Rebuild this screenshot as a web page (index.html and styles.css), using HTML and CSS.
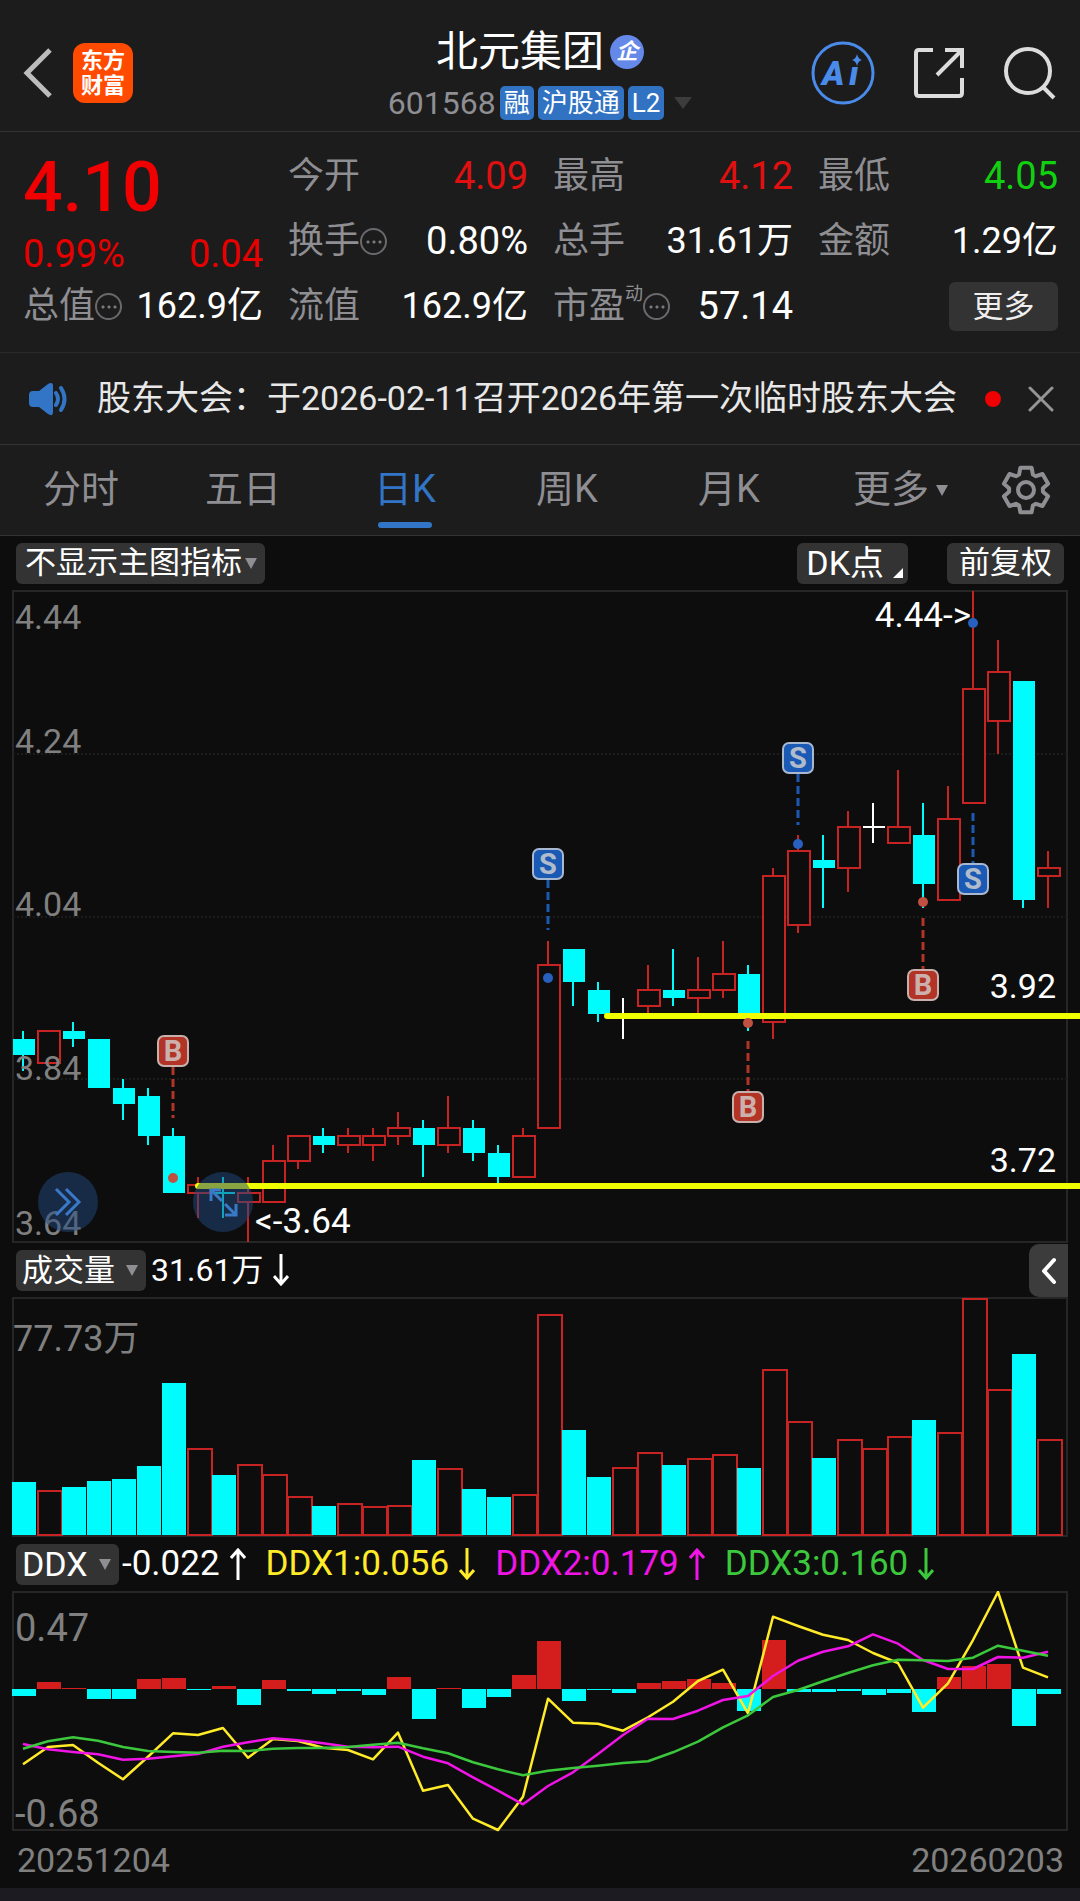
FILE: index.html
```html
<!DOCTYPE html>
<html lang="zh-CN">
<head>
<meta charset="utf-8">
<meta name="viewport" content="width=device-width, initial-scale=1">
<title>北元集团 601568</title>
<link rel="stylesheet" href="styles.css">
</head>
<body>
<header class="topbar">
  <div class="topbar-side">
    <button class="icon-btn" aria-label="返回">
      <svg width="30" height="50" viewBox="0 0 30 50"><path d="M27 2 4 25l23 23" fill="none" stroke="#bdbdbd" stroke-width="5"/></svg>
    </button>
    <a class="brand" href="#"><span>东方</span><span>财富</span></a>
  </div>
  <div class="stock">
    <h1 class="stock-name">北元集团<span class="corp">企</span></h1>
    <div class="stock-meta">
      <span class="code">601568</span>
      <span class="tag">融</span><span class="tag">沪股通</span><span class="tag">L2</span>
      <span class="tri tri-dim"></span>
    </div>
  </div>
  <div class="topbar-side topbar-actions">
    <button class="icon-btn" aria-label="Ai">
      <svg width="64" height="64" viewBox="0 0 64 64">
        <circle cx="32" cy="32" r="30" fill="none" stroke="#4a8bea" stroke-width="3"/>
        <text class="ai-text" x="11" y="44">A</text><text class="ai-text" x="38" y="44">ı</text>
        <path d="M46 13q1 5 5 6-4 1-5 6-1-5-5-6 4-1 5-6z" fill="#4a8bea"/>
      </svg>
    </button>
    <button class="icon-btn" aria-label="分享">
      <svg width="52" height="52" viewBox="0 0 52 52" fill="none" stroke="#dcdcdc" stroke-width="4"><path d="M20 3H6Q3 3 3 6v40q0 3 3 3h40q3 0 3-3V31M32 3h17v18M48 4 24 28"/></svg>
    </button>
    <button class="icon-btn" aria-label="搜索">
      <svg width="54" height="54" viewBox="0 0 54 54" fill="none" stroke="#dcdcdc" stroke-width="4"><circle cx="25" cy="25" r="22"/><path d="M40 41 51 52"/></svg>
    </button>
  </div>
</header>

<section class="quote">
  <div class="quote-main">
    <div class="price">4.10</div>
    <div class="change"><span>0.99%</span><span>0.04</span></div>
  </div>
  <div class="cell"><span class="label">今开</span><span class="num up">4.09</span></div>
  <div class="cell"><span class="label">最高</span><span class="num up">4.12</span></div>
  <div class="cell"><span class="label">最低</span><span class="num down">4.05</span></div>
  <div class="cell"><span class="label">换手<i class="more-dot"></i></span><span class="num">0.80%</span></div>
  <div class="cell"><span class="label">总手</span><span class="amount">31.61万</span></div>
  <div class="cell"><span class="label">金额</span><span class="amount">1.29亿</span></div>
  <div class="cell"><span class="label">总值<i class="more-dot"></i></span><span class="amount">162.9亿</span></div>
  <div class="cell"><span class="label">流值</span><span class="amount">162.9亿</span></div>
  <div class="cell"><span class="label">市盈<sup>动</sup><i class="more-dot"></i></span><span class="num">57.14</span></div>
  <div class="cell cell-end"><button class="more-btn">更多</button></div>
</section>

<section class="notice">
  <svg width="40" height="34" viewBox="0 0 40 34"><path d="M4 9h6L19 2q5-3 5 2v26q0 5-5 2l-9-7H4q-4 0-4-4v-8q0-4 4-4z" fill="#3275c6"/><path d="M27 11q4 6 0 12M32 6q7 11 0 22" fill="none" stroke="#3275c6" stroke-width="4" stroke-linecap="round"/></svg>
  <a class="notice-text" href="#">股东大会：于2026-02-11召开2026年第一次临时股东大会</a>
  <span class="notice-dot"></span>
  <button class="icon-btn" aria-label="关闭">
    <svg width="26" height="26" viewBox="0 0 26 26"><path d="M2 2 24 24M24 2 2 24" stroke="#959595" stroke-width="3" stroke-linecap="round"/></svg>
  </button>
</section>

<nav class="tabs">
  <button class="tab">分时</button>
  <button class="tab">五日</button>
  <button class="tab active">日K</button>
  <button class="tab">周K</button>
  <button class="tab">月K</button>
  <button class="tab tab-more">更多<span class="tri"></span></button>
  <button class="tab-gear icon-btn" aria-label="设置">
    <svg width="50" height="50" viewBox="-25 -25 50 50" fill="none" stroke="#8e8e93" stroke-width="4" stroke-linejoin="round"><path d="M-6.9-15.5-5.6-22.3H5.6L6.9-15.5 10-13.8 16.5-16 22.1-6.3 16.9-1.8V1.8L22.1 6.3 16.5 16 10 13.8 6.9 15.5 5.6 22.3H-5.6L-6.9 15.5-10 13.8-16.5 16-22.1 6.3-16.9 1.8V-1.8L-22.1-6.3-16.5-16-10-13.8z"/><circle r="8"/></svg>
  </button>
</nav>

<main class="charts">
  <div class="bar bar-main">
    <label class="drop drop-tight"><select aria-label="主图指标"><option>不显示主图指标</option></select><span class="tri"></span></label>
    <button class="chip chip-dk">DK点<span class="corner"></span></button>
    <button class="chip">前复权</button>
  </div>
  <div class="price-wrap">
    <svg id="price" class="plot" viewBox="0 590 1080 654" role="img" aria-label="日K线"></svg>
    <button class="round round-next" aria-label="展开">
      <svg width="28" height="30" viewBox="0 0 28 30" fill="none" stroke="#3a78c8" stroke-width="3"><path d="M2 2 15 15 2 28M12 2 25 15 12 28"/></svg>
    </button>
    <button class="round round-full" aria-label="全屏">
      <svg width="30" height="30" viewBox="0 0 30 30" fill="none" stroke="#3a78c8" stroke-width="3"><path d="M3 14V3h10M3 3l11 11M28 17v11H17M28 28 17 17"/></svg>
    </button>
  </div>
  <div class="bar bar-volume">
    <label class="drop"><select aria-label="副图一"><option>成交量</option></select><span class="tri"></span></label>
    <span class="legend legend-amount">31.61万<svg class="arrow" viewBox="0 0 16 32"><path d="M8 0v30M1 22l7 8 7-8"/></svg></span>
    <button class="fold" aria-label="收起">
      <svg width="16" height="28" viewBox="0 0 16 28"><path d="M13 3 3 14l10 11" fill="none" stroke="#fff" stroke-width="4" stroke-linecap="round" stroke-linejoin="round"/></svg>
    </button>
  </div>
  <svg id="volume" class="plot" viewBox="0 1297 1080 240" role="img" aria-label="成交量"></svg>
  <div class="bar">
    <label class="drop drop-latin"><select aria-label="副图二"><option>DDX</option></select><span class="tri"></span></label>
    <span class="legend">-0.022<svg class="arrow" viewBox="0 0 16 32"><path d="M8 32V2M1 10l7-8 7 8"/></svg></span>
    <span class="legend yellow">DDX1:0.056<svg class="arrow" viewBox="0 0 16 32"><path d="M8 0v30M1 22l7 8 7-8"/></svg></span>
    <span class="legend magenta">DDX2:0.179<svg class="arrow" viewBox="0 0 16 32"><path d="M8 32V2M1 10l7-8 7 8"/></svg></span>
    <span class="legend green">DDX3:0.160<svg class="arrow" viewBox="0 0 16 32"><path d="M8 0v30M1 22l7 8 7-8"/></svg></span>
  </div>
  <svg id="ddx" class="plot" viewBox="0 1591 1080 248" role="img" aria-label="DDX"></svg>
  <div class="dates"><span>20251204</span><span>20260203</span></div>
</main>
<footer class="home-strip"></footer>
<script src="charts.js"></script>
</body>
</html>
```

FILE: styles.css
```css
* { box-sizing: border-box; }

body {
  margin: 0;
  min-height: 100vh;
  display: flex;
  flex-direction: column;
  background: #1c1c1c;
  color: #fff;
  font-family: Roboto, "Noto Sans CJK SC", sans-serif;
  line-height: 1.2;
}

button, select {
  margin: 0;
  padding: 0;
  border: 0;
  background: none;
  color: inherit;
  font: inherit;
}

a { color: inherit; text-decoration: none; }
svg { display: block; }

.icon-btn { display: flex; align-items: center; justify-content: center; }

.tri {
  display: inline-block;
  border: 6px solid transparent;
  border-top: 11px solid #8e8e93;
  border-bottom: 0;
}
.tri-dim { border-width: 12px 9px 0; border-top-color: #3c3c3c; margin-left: 6px; }

/* header */
.topbar {
  display: grid;
  grid-template-columns: 1fr auto 1fr;
  height: 132px;
  padding: 14px 23px 0;
  border-bottom: 1px solid #333;
}
.topbar-side { display: flex; align-items: center; gap: 20px; }
.topbar-actions { justify-content: flex-end; gap: 38px; }
.brand {
  display: flex;
  flex-direction: column;
  align-items: center;
  justify-content: center;
  width: 60px;
  height: 60px;
  border-radius: 12px;
  background: #ff4a00;
  font-size: 22px;
  line-height: 25px;
  font-weight: 700;
}
.stock { display: flex; flex-direction: column; align-items: center; gap: 8px; padding-top: 12px; }
.stock-name {
  display: flex;
  align-items: center;
  gap: 6px;
  margin: 0;
  font-size: 42px;
  line-height: 52px;
  font-weight: 400;
}
.corp {
  width: 34px;
  height: 34px;
  border-radius: 17px;
  background: #6489e8;
  font-size: 22px;
  line-height: 34px;
  font-weight: 700;
  font-style: italic;
  text-align: center;
}
.stock-meta { display: flex; align-items: center; gap: 4px; }
.code { color: #8e8e93; font-size: 32px; line-height: 34px; }
.tag {
  padding: 0 4px;
  border-radius: 5px;
  background: #3173c2;
  font-size: 26px;
  line-height: 34px;
}
.ai-text { fill: #4a8bea; font: italic 900 34px Roboto, sans-serif; }

/* quote */
.quote {
  display: grid;
  grid-template-columns: repeat(4, 1fr);
  grid-auto-rows: 65px;
  column-gap: 25px;
  padding: 12px 22px 13px 23px;
  border-bottom: 1px solid #2a2a2a;
}
.quote-main { grid-row: span 2; color: #e60000; }
.price { font-size: 70px; line-height: 86px; font-weight: 500; color: #f00000; }
.change { display: flex; justify-content: space-between; font-size: 38px; line-height: 48px; }
.cell { display: flex; align-items: center; justify-content: space-between; white-space: nowrap; }
.cell-end { justify-content: flex-end; }
.label { display: flex; align-items: center; color: #8e8e93; font-size: 36px; }
.label sup { align-self: flex-start; font-size: 18px; line-height: 18px; }
.num { font-size: 38px; }
.amount { font-size: 36px; }
.up { color: #e01010; }
.down { color: #10d010; }
.more-dot {
  width: 27px;
  height: 27px;
  border: 2px solid #6a6a6e;
  border-radius: 14px;
  background:
    radial-gradient(circle at 6px 12px, #7a7a7e 1px, transparent 2px),
    radial-gradient(circle at 12px 12px, #7a7a7e 1px, transparent 2px),
    radial-gradient(circle at 18px 12px, #7a7a7e 1px, transparent 2px);
}
.more-btn {
  width: 109px;
  height: 49px;
  border-radius: 6px;
  background: #333;
  color: #eee;
  font-size: 31px;
  line-height: 49px;
}

/* notice */
.notice {
  display: flex;
  align-items: center;
  height: 92px;
  padding: 0 26px 0 29px;
  border-bottom: 1px solid #333;
}
.notice-text { flex: 1; padding-left: 28px; color: #e8e8e8; font-size: 34px; white-space: nowrap; }
.notice-dot { width: 16px; height: 16px; margin-right: 27px; border-radius: 8px; background: #f00000; }

/* tabs */
.tabs {
  display: grid;
  grid-template-columns: repeat(6, 3fr) 2fr;
  height: 91px;
  border-bottom: 1px solid #333;
}
.tab { position: relative; color: #8e8e93; font-size: 38px; }
.tab.active { color: #3275c6; }
.tab.active::after {
  content: "";
  position: absolute;
  left: 50%;
  bottom: 7px;
  width: 54px;
  height: 6px;
  margin-left: -27px;
  border-radius: 3px;
  background: #3275c6;
}
.tab-more .tri { position: absolute; top: 40px; right: 24px; }

/* charts */
.charts { background: #0d0d0d; }
.bar { display: flex; align-items: center; height: 54px; padding-left: 16px; }
.bar-main { padding-right: 16px; gap: 39px; }
.bar-volume { height: 53px; }
.plot { width: 100%; height: auto; }
.drop {
  display: flex;
  align-items: center;
  gap: 11px;
  height: 41px;
  padding: 0 8px 0 6px;
  border-radius: 6px;
  background: #333;
}
.drop-tight { gap: 3px; margin-right: auto; padding-left: 9px; }
.drop select { appearance: none; font-size: 31px; line-height: 40px; outline: 0; }
.drop-latin select { font-size: 34px; }
.chip {
  position: relative;
  height: 41px;
  padding: 0 12px;
  border-radius: 6px;
  background: #333;
  font-size: 31px;
  line-height: 40px;
}
.chip-dk { padding-right: 24px; padding-left: 9px; font-size: 34px; }
.corner {
  position: absolute;
  right: 5px;
  bottom: 6px;
  border-left: 10px solid transparent;
  border-bottom: 10px solid #fff;
}
.legend { display: flex; align-items: center; gap: 10px; margin-left: 3px; font-size: 35px; white-space: nowrap; }
.legend + .legend { margin-left: 20px; }
.legend-amount { margin-left: 5px; font-size: 32px; }
.arrow { width: 16px; height: 32px; fill: none; stroke: currentColor; stroke-width: 3; }
.yellow { color: #ffeb28; }
.magenta { color: #f014e6; }
.green { color: #3cc83c; }
.fold {
  display: flex;
  align-items: center;
  justify-content: center;
  width: 39px;
  height: 53px;
  margin-left: auto;
  margin-right: 12px;
  border-radius: 10px 0 0 10px;
  background: #3c3c3c;
}

.price-wrap { position: relative; }
.round {
  position: absolute;
  bottom: 12px;
  display: flex;
  align-items: center;
  justify-content: center;
  width: 60px;
  height: 60px;
  border-radius: 30px;
  background: rgba(34, 74, 128, 0.5);
}
.round-next { left: 38px; }
.round-full { left: 193px; }

.dates {
  display: flex;
  justify-content: space-between;
  padding: 0 16px 7px 17px;
  color: #808080;
  font-size: 34px;
  line-height: 42px;
}
.home-strip { flex: 1; min-height: 12px; background: #1c1b22; }

.frame { fill: none; stroke: #262626; stroke-width: 2; }
.grid { stroke: #1c1c1c; stroke-width: 2; stroke-dasharray: 2 2; }
.zone { stroke: #f0ff00; stroke-width: 6; stroke-linecap: round; }
.axis { fill: #808080; font-size: 34px; }
.axis-volume { fill: #808080; font-size: 36px; }
.axis-ddx { fill: #808080; font-size: 38px; }
.note { fill: #fff; font-size: 35px; }
.level { fill: #fff; font-size: 34px; text-anchor: end; }
.mark { font-size: 29px; font-weight: 700; text-anchor: middle; }
```

FILE: charts.js
```js
const NS = "http://www.w3.org/2000/svg";
const RED = "#c82323", CYAN = "#00fcfc", WHITE = "#ffffff";
const STEP = 25;

function add(parent, name, attrs, text) {
  const node = document.createElementNS(NS, name);
  for (const key in attrs) node.setAttribute(key, attrs[key]);
  if (text) node.textContent = text;
  parent.appendChild(node);
  return node;
}
const line = (p, x1, y1, x2, y2, attrs) => add(p, "line", { x1, y1, x2, y2, ...attrs });

// kind, high, body top, body bottom, low (prices in cents)
const candles = [
  ["c",390,389,387,385],["r",390,390,386,386],["c",391,390,389,388],["c",389,389,383,383],
  ["c",384,383,381,379],["c",383,382,377,376],["c",378,377,370,370],["r",372,371,370,367],
  ["c",372,370,370,367],["r",372,370,369,364],["r",376,374,369,369],["r",377,377,374,373],
  ["c",378,377,376,375],["r",378,377,376,375],["r",378,377,376,374],["r",380,378,377,376],
  ["c",379,378,376,372],["r",382,378,376,375],["c",379,378,375,374],["c",376,375,372,371],
  ["r",378,377,372,372],["r",401,398,378,378],["c",400,400,396,393],["c",396,395,392,391],
  ["w",394,392,392,389],["r",398,395,393,392],["c",400,395,394,393],["r",399,395,394,392],
  ["r",401,397,395,394],["c",398,397,392,390],["r",410,409,391,389],["r",414,412,403,402],
  ["c",414,411,410,405],["r",417,415,410,407],["w",418,415,415,413],["r",422,415,413,413],
  ["c",418,414,408,405],["r",420,416,406,406],["r",444,432,418,418],["r",438,434,428,424],
  ["c",433,433,406,405],["r",412,410,409,405]
];

const volumes = [53,45,48,54,56,69,152,87,60,71,61,39,29,32,29,30,75,67,46,38,41,221,105,58,68,83,70,77,81,67,166,114,77,96,87,99,115,103,237,146,181,96];

const ddxBars = [-7,7,1,-10,-10,10,11,-1,3,-16,9,-2,-5,-2,-6,12,-30,1,-19,-8,14,48,-12,-1,-4,6,8,10,6,-22,49,-3,-3,-2,-6,-4,-23,12,23,25,-37,-5];

// curve heights below the top of the pane, three steps to a pixel
const curves = {
  "#ffeb28": [673,621,615,668,718,650,580,585,564,653,597,603,623,630,658,578,752,735,836,870,770,476,548,551,572,532,485,423,389,520,230,258,284,300,339,369,503,430,300,156,383,412],
  "#f014e6": [612,628,636,643,659,656,649,642,620,607,595,601,610,620,622,620,650,670,712,752,793,738,697,642,585,536,537,512,480,468,408,362,335,319,283,311,360,387,387,351,353,335],
  "#3cc83c": [626,604,592,602,621,633,636,638,632,633,626,624,624,621,614,608,625,640,667,688,706,692,684,677,669,664,637,605,562,526,471,450,424,399,376,359,361,363,353,317,332,347]
};

const cx = i => 23 + STEP * i;
const py = cents => Math.round(591 + (444 - cents) * 8.14);

const price = document.getElementById("price");
add(price, "rect", { x: 13, y: 591, width: 1054, height: 651, class: "frame" });
[424, 404, 384].forEach(c => line(price, 13, py(c), 1067, py(c), { class: "grid" }));

candles.forEach(([kind, high, top, bottom, low], i) => {
  const x = cx(i);
  const color = kind === "r" ? RED : kind === "c" ? CYAN : WHITE;
  const wick = { stroke: color, "stroke-width": 2 };
  line(price, x, py(high), x, py(top), wick);
  line(price, x, py(bottom), x, py(low), wick);
  if (top === bottom) {
    line(price, x - 10, py(top), x + 12, py(top), { stroke: color, "stroke-width": 2 });
  } else if (kind === "r") {
    add(price, "rect", { x: x - 10, y: py(top), width: 22, height: py(bottom) - py(top), fill: "#0d0d0d", stroke: RED, "stroke-width": 2 });
  } else {
    add(price, "rect", { x: x - 10, y: py(top), width: 22, height: py(bottom) - py(top), fill: CYAN });
  }
});

line(price, 607, 1016, 1090, 1016, { class: "zone" });
line(price, 198, 1186, 1090, 1186, { class: "zone" });

// letter, candle, badge top, dashed stem from/to, dot
[
  ["B", 6, 1035, 1067, 1118, 1178], ["S", 21, 848, 880, 930, 978],
  ["B", 29, 1091, 1041, 1091, 1023], ["S", 31, 742, 774, 825, 844],
  ["B", 36, 969, 918, 969, 902], ["S", 38, 863, 813, 863, 623]
].forEach(([letter, i, top, from, to, dot]) => {
  const buy = letter === "B", x = cx(i);
  const tone = buy ? "#b23427" : "#1b5ab4";
  line(price, x, from, x, to, { stroke: tone, "stroke-width": 3, "stroke-dasharray": "8 4" });
  add(price, "circle", { cx: x, cy: dot, r: 5, fill: buy ? "#c05040" : "#2860c0" });
  add(price, "rect", { x: x - 15, y: top + 1, width: 30, height: 30, rx: 6, fill: tone, stroke: buy ? "#c8b0ac" : "#a8b8d0", "stroke-width": 2 });
  add(price, "text", { x, y: top + 26, class: "mark", fill: buy ? "#ccb0ac" : "#b0bccc" }, letter);
});

[["4.44", 629], ["4.24", 753], ["4.04", 916], ["3.84", 1080], ["3.64", 1235]]
  .forEach(([t, y]) => add(price, "text", { x: 15, y, class: "axis" }, t));
add(price, "text", { x: 971, y: 627, class: "note", "text-anchor": "end" }, "4.44->");
add(price, "text", { x: 255, y: 1233, class: "note" }, "<-3.64");
add(price, "text", { x: 1056, y: 998, class: "level" }, "3.92");
add(price, "text", { x: 1056, y: 1172, class: "level" }, "3.72");

const volume = document.getElementById("volume");
add(volume, "rect", { x: 13, y: 1298, width: 1054, height: 238, class: "frame" });
volumes.forEach((h, i) => {
  const x = 12 + STEP * i;
  if (candles[i][0] === "c") {
    add(volume, "rect", { x, y: 1535 - h, width: 24, height: h, fill: CYAN });
  } else {
    add(volume, "rect", { x: x + 1, y: 1536 - h, width: 24, height: h - 1, fill: "none", stroke: RED, "stroke-width": 2 });
  }
});
add(volume, "text", { x: 13, y: 1351, class: "axis-volume" }, "77.73万");

const ddx = document.getElementById("ddx");
add(ddx, "rect", { x: 13, y: 1592, width: 1054, height: 238, class: "frame" });
ddxBars.forEach((v, i) => {
  add(ddx, "rect", { x: 12 + STEP * i, y: v > 0 ? 1689 - v : 1689, width: 24, height: Math.abs(v), fill: v > 0 ? "#d41e1e" : CYAN });
});
for (const color in curves) {
  const points = curves[color].map((v, i) => cx(i) + "," + (1540 + v / 3).toFixed(1)).join(" ");
  add(ddx, "polyline", { points, fill: "none", stroke: color, "stroke-width": 2.5, "stroke-linejoin": "round" });
}
add(ddx, "text", { x: 15, y: 1641, class: "axis-ddx" }, "0.47");
add(ddx, "text", { x: 15, y: 1827, class: "axis-ddx" }, "-0.68");
```
